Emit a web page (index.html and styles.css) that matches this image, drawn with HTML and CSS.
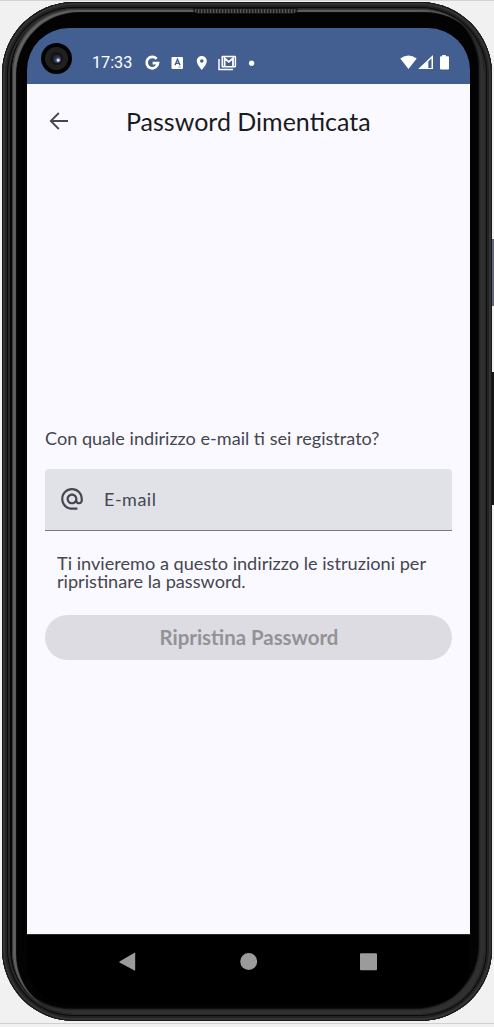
FILE: index.html
```html
<!DOCTYPE html>
<html lang="it">
<head>
<meta charset="utf-8">
<title>Password Dimenticata</title>
<link rel="stylesheet" href="styles.css">
</head>
<body>
<div class="stage">
  <div class="side-button power"></div>
  <div class="side-button volume"></div>
  <div class="phone">
    <div class="rim">
      <div class="screen">
        <div class="status-bar">
          <span class="clock">17:33</span>
          <svg class="notifications" width="112" height="20" viewBox="0 0 112 20" fill="#fff">
            <path d="M12.6 5.8A5.7 5.7 0 1 0 14 10.2H8.6" fill="none" stroke="#fff" stroke-width="2.7"/>
            <rect x="27.500" y="4" width="11.500" height="12" rx="1"/>
            <path d="M31 12.2 33.5 6.3 36 12.2M32 10.4h3" fill="none" stroke="#435f91" stroke-width="1.4"/>
            <path d="M34 14h3" stroke="#9dadcb" stroke-width="1"/>
            <path fill-rule="evenodd" d="M57.8 3C54.9 3 52.8 5.2 52.8 8c0 3.6 5 9 5 9s5-5.4 5-9c0-2.8-2.1-5-5-5zm0 3.2a1.8 1.8 0 1 1 0 3.6 1.8 1.8 0 0 1 0-3.6z"/>
            <path d="M75 6v10.500h14" fill="none" stroke="#fff" stroke-width="1.5"/>
            <rect x="78.2" y="3.4" width="13.200" height="10.400" rx=".6" fill="none" stroke="#fff" stroke-width="1.5"/>
            <path d="M80.600 13.500V5.2l4.200 3.700 4.200-3.700V13.500" fill="none" stroke="#fff" stroke-width="1.8"/>
            <circle cx="107.6" cy="10.2" r="2.6"/>
          </svg>
          <svg class="system" width="52" height="18" viewBox="0 0 52 18" fill="#fff">
            <path d="M.3 4.5Q8.5-1.5 16.7 4.5L8.5 15z"/>
            <path fill-rule="evenodd" d="M18.2 15 33 1v14zM28.3 7.5V14h3.2V4.4z"/>
            <path d="M42.2 1h3.6v1.2H48q1 0 1 1V14.500q0 1-1 1h-7q-1 0-1-1V3.200q0-1 1-1h1.200z"/>
          </svg>
        </div>
        <main class="app">
          <header class="app-bar">
            <svg class="back" width="20" height="18" viewBox="0 0 20 18" fill="none" stroke="#45464f" stroke-width="1.8"><path d="M19 9H2M9.800 1 1.800 9l8 8"/></svg>
            <h1 class="title">Password Dimenticata</h1>
          </header>
          <form class="form">
            <label class="question">Con quale indirizzo e-mail ti sei registrato?</label>
            <div class="field">
              <svg class="at" width="26" height="26" viewBox="0 0 24 24" fill="#45464f"><path d="M12 1.950c-5.520 0-10 4.480-10 10s4.480 10 10 10h5v-2h-5c-4.340 0-8-3.660-8-8s3.660-8 8-8 8 3.660 8 8v1.430c0 .79-.71 1.570-1.500 1.570s-1.500-.78-1.500-1.570v-1.430c0-2.760-2.240-5-5-5s-5 2.240-5 5 2.240 5 5 5c1.380 0 2.640-.56 3.540-1.470.65.89 1.770 1.470 2.960 1.470 1.970 0 3.500-1.600 3.500-3.570v-1.430c0-5.520-4.480-10-10-10zm0 13c-1.660 0-3-1.340-3-3s1.340-3 3-3 3 1.340 3 3-1.340 3-3 3z"/></svg>
              <span class="placeholder">E-mail</span>
            </div>
            <p class="hint">Ti invieremo a questo indirizzo le istruzioni per<br>ripristinare la password.</p>
            <button class="submit" type="button" disabled>Ripristina Password</button>
          </form>
        </main>
        <nav class="nav-bar">
          <svg width="258" height="20" viewBox="0 0 258 20" fill="#9b9b9b">
            <path d="M.5 9.500 15.500.8q.7-.3.700.5v16.800q0 .8-.7.500L.5 10.500q-.5-.5 0-1z"/>
            <circle cx="129.700" cy="9.500" r="8.500"/>
            <rect x="241" y="1.200" width="17" height="17" rx="1"/>
          </svg>
        </nav>
      </div>
    </div>
    <div class="speaker"></div>
    <div class="camera"><i class="lens"></i></div>
  </div>
</div>
</body>
</html>
```
FILE: styles.css
```css
* { box-sizing: border-box; }

body {
  margin: 0;
  background: #f1f1f1;
  font-family: Lato, "Open Sans", sans-serif;
  color: #45464f;
}

.stage {
  position: relative;
  height: 1027px;
  padding: 1px 2px 5px;
  overflow: hidden;
  border-top: 1px solid #d4d4d4;
  background: linear-gradient(#d0d0d0, #d0d0d0) 0 1022px / 100% 1px no-repeat;
}

.side-button {
  position: absolute;
  right: 0;
  width: 3px;
}
.power { top: 238px; height: 67px; background: #66667c; }
.volume { top: 371px; height: 133px; background: #151516; }

.phone {
  position: relative;
  height: 1019px;
  padding: 7px 8px 7px 10px;
  border-radius: 72px;
  background: #080808;
  box-shadow:
    inset 0 0 0 1px #171717,
    inset 0 0 0 3px #343434,
    inset 0 0 0 5px #222,
    inset 0 0 0 6px #0b0b0b,
    inset 0 0 0 8px #292929;
}

.rim {
  height: 100%;
  padding: 19px 14px 9px 15px;
  border-radius: 63px;
  background: #030303;
  box-shadow:
    inset 1px 1px 1px #333,
    inset 4px 3px 1px #636363,
    inset -5px -5px 2px #303030;
}

.screen {
  display: flex;
  flex-direction: column;
  height: 100%;
  overflow: hidden;
  border-radius: 42px;
  background: #000;
}

.status-bar {
  display: flex;
  flex: 0 0 56px;
  align-items: center;
  padding: 13px 18px 0 65px;
  background: #435f91;
}
.clock {
  width: 52px;
  color: #fff;
  font: 16.2px/20px Roboto, sans-serif;
}
.notifications { flex: none; }
.system { margin-left: auto; }

.app {
  flex: 0 0 850px;
  display: flex;
  flex-direction: column;
  background: #faf9ff;
}

.app-bar {
  display: grid;
  grid-template-columns: 77px 1fr;
  align-items: center;
  height: 73px;
  padding-left: 22px;
}
.title {
  margin: 1px 0 0;
  color: #1a1b20;
  font-size: 25px;
  font-weight: 400;
  line-height: 32px;
  white-space: nowrap;
}

.form { padding: 270px 18px 0; }
.question {
  display: block;
  height: 42px;
  font-size: 18.100px;
  line-height: 23px;
}
.field {
  display: flex;
  align-items: center;
  gap: 17px;
  height: 62px;
  padding: 0 15px 2px 14px;
  border-bottom: 1px solid #777881;
  border-radius: 4px 4px 0 0;
  background: #e1e2e8;
}
.at { flex: none; margin-left: 0; margin-right: 2px; }
.placeholder { font-size: 18px; letter-spacing: .5px; }

.hint {
  margin: 23px 0 0 12px;
  font-size: 18.150px;
  line-height: 18px;
  white-space: nowrap;
}
.submit {
  display: block;
  width: 100%;
  height: 45px;
  margin-top: 25px;
  padding: 0 0 0 1px;
  border: 0;
  border-radius: 23px;
  background: #dddce2;
  color: #929297;
  font: 700 20.400px/45px Lato, sans-serif;
}

.nav-bar {
  display: flex;
  justify-content: center;
  padding: 17px 2px 0 0;
  border-top: 1px solid #292929;
}

.speaker {
  position: absolute;
  top: 6px;
  left: 191px;
  width: 105px;
  height: 6px;
  border: 1px solid #151515;
  border-radius: 1px 1px 5px 5px;
  background: repeating-linear-gradient(90deg, #242424 0 1px, #555 1px 2px, #303030 2px 3px);
}

.camera {
  position: absolute;
  top: 41px;
  left: 39px;
  display: grid;
  place-items: center;
  width: 31px;
  height: 31px;
  border-radius: 50%;
  background: radial-gradient(circle, #141414 0 6px, #202020 7px 11px, #020202 12px);
}
.lens {
  width: 8px;
  height: 8px;
  border-radius: 50%;
  background: radial-gradient(circle at 65% 65%, #d3dcf5 0 1px, #48557a 2px, #252a3b 4px);
}
```
